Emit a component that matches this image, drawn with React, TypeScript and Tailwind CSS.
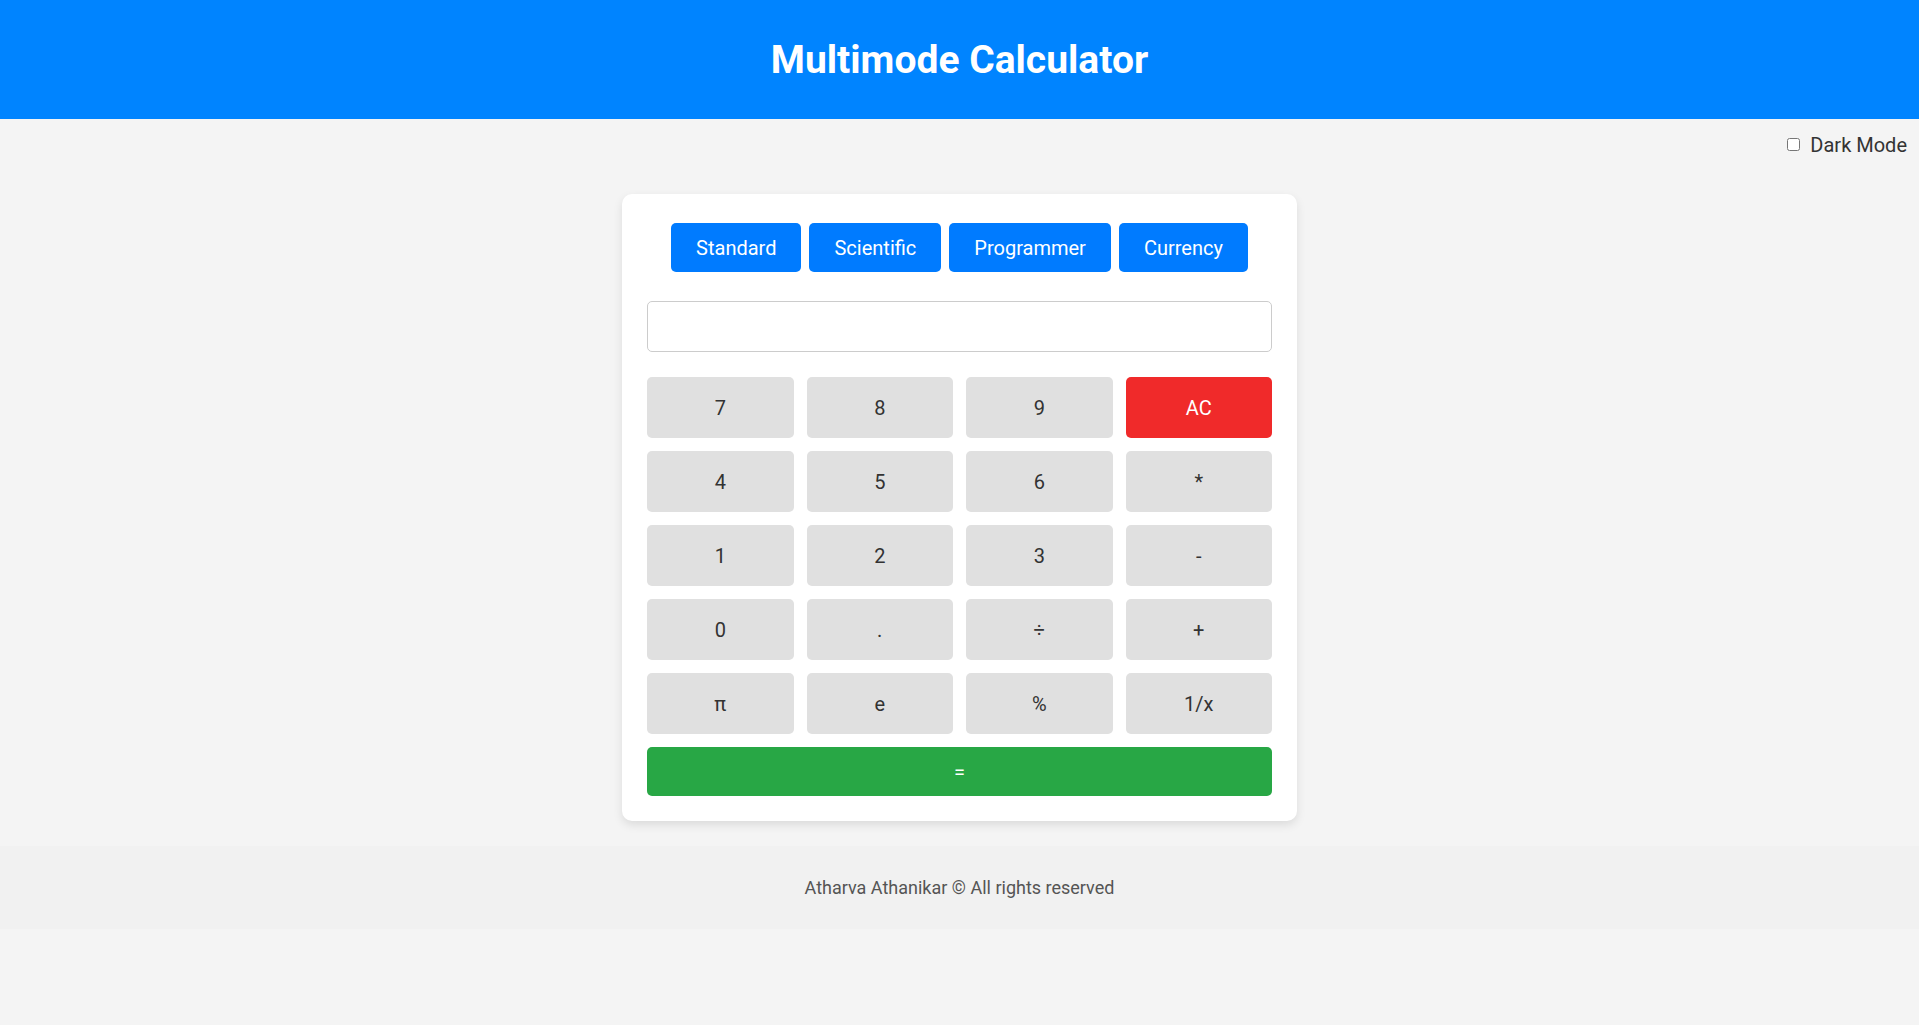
import { useState } from "react";

const modes = ["Standard", "Scientific", "Programmer", "Currency"];

const keys = [
  "7", "8", "9", "AC",
  "4", "5", "6", "*",
  "1", "2", "3", "-",
  "0", ".", "÷", "+",
  "π", "e", "%", "1/x",
];

export default function App() {
  const [dark, setDark] = useState(false);
  const [display, setDisplay] = useState("");

  return (
    <div className="min-h-[1025px] bg-[#f4f4f4] font-['Roboto',sans-serif] text-[#333]">
      <header className="h-[119px] bg-[#0084ff] flex items-center justify-center pt-[1px]">
        <h1 className="text-[39px] font-bold text-white leading-none">
          Multimode Calculator
        </h1>
      </header>

      <div className="flex justify-end pr-[12px] pt-[15px]">
        <label className="flex items-center gap-[10px] text-[20px] leading-[23px] text-[#333]">
          <input
            type="checkbox"
            checked={dark}
            onChange={(e) => setDark(e.target.checked)}
            className="w-[13px] h-[13px] mt-[-2px]"
          />
          Dark Mode
        </label>
      </div>

      <div className="w-[675px] mx-auto mt-[37px] bg-white rounded-[10px] p-[25px] shadow-[0_4px_10px_rgba(0,0,0,0.1)]">
        <div className="flex justify-center gap-2 mt-[4px]">
          {modes.map((m) => (
            <button
              key={m}
              className="h-[49px] px-[25px] rounded-[5px] bg-[#007bff] text-white text-[20px] leading-none"
            >
              {m}
            </button>
          ))}
        </div>

        <input
          type="text"
          value={display}
          onChange={(e) => setDisplay(e.target.value)}
          className="mt-[29px] block w-full h-[51px] border border-[#ccc] rounded-[5px] px-3 text-[24px] text-right outline-none"
        />

        <div className="mt-[25px] grid grid-cols-4 gap-[13px]">
          {keys.map((k) => (
            <button
              key={k}
              onClick={() => (k === "AC" ? setDisplay("") : setDisplay(display + k))}
              className={
                k === "AC"
                  ? "h-[61px] rounded-[5px] bg-[#f02a2a] text-white text-[20px]"
                  : "h-[61px] rounded-[5px] bg-[#e0e0e0] text-[#333] text-[20px]"
              }
            >
              {k}
            </button>
          ))}
        </div>

        <button className="mt-[13px] w-full h-[49px] rounded-[5px] bg-[#28a745] text-white text-[20px]">
          =
        </button>
      </div>

      <footer className="mt-[25px] bg-[#f1f1f1] py-[31px] text-center text-[18px] leading-[21px] text-[#555]">
        Atharva Athanikar © All rights reserved
      </footer>
    </div>
  );
}
